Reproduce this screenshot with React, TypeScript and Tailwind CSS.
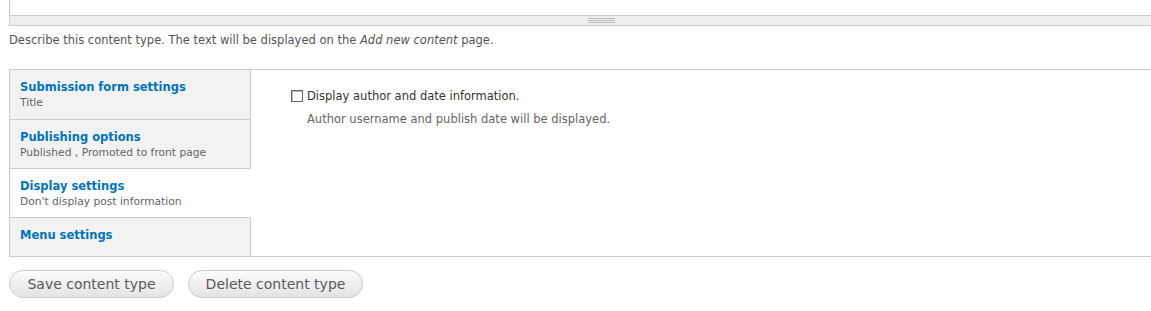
import React from 'react';

interface Tab {
  title: string;
  summary?: string;
  active?: boolean;
  height: string;
}

const tabs: Tab[] = [
  { title: 'Submission form settings', summary: 'Title', height: 'h-[50px]' },
  { title: 'Publishing options', summary: 'Published , Promoted to front page', height: 'h-[49px]' },
  { title: 'Display settings', summary: "Don't display post information", active: true, height: 'h-[49px]' },
  { title: 'Menu settings', height: 'h-[38px]' },
];

export default function App() {
  return (
    <div className="w-[1151px] h-[311px] overflow-hidden bg-white text-[#333] font-['DejaVu_Sans',Verdana,sans-serif]">
      {/* textarea bottom + grippie */}
      <div className="ml-[9px] w-[1184px]">
        <div className="h-[16px] border-l border-b border-[#ccc] bg-white" />
        <div className="h-[10px] border-l border-b border-[#ccc] bg-[#eee] flex justify-center pt-[2px]">
          <div className="flex flex-col gap-[1px] w-[27px]">
            <div className="h-px bg-[#bbb]" />
            <div className="h-px bg-[#bbb]" />
            <div className="h-px bg-[#bbb]" />
          </div>
        </div>
      </div>

      <p className="ml-[9px] mt-[6px] text-[11.5px] leading-[17px] text-[#555]">
        Describe this content type. The text will be displayed on the <em>Add new content</em> page.
      </p>

      {/* vertical tabs */}
      <div className="ml-[9px] mt-[20px] w-[1184px] flex border-t border-b border-l border-[#ccc]">
        <ul className="w-[241px] shrink-0">
          {tabs.map((t, i) => (
            <li
              key={i}
              className={`${t.height} px-[10px] pt-[9px] border-b border-[#ccc] last:border-b-0 ${
                t.active ? 'bg-white border-r border-r-white' : 'bg-[#f2f2f2] border-r'
              }`}
            >
              <div className="text-[11.5px] leading-[17px] font-bold text-[#0074bd]">{t.title}</div>
              {t.summary && <div className="text-[10.7px] leading-[14px] text-[#666]">{t.summary}</div>}
            </li>
          ))}
        </ul>
        <div className="flex-1 pl-[40px] pt-[18px]">
          <label className="flex items-center gap-[4px] text-[11.5px] leading-[16px] text-[#333]">
            <span className="w-[12px] h-[12px] border border-[#666] bg-white shadow-[inset_1px_1px_0_#bbb]" />
            Display author and date information.
          </label>
          <div className="ml-[16px] mt-[7px] text-[11.5px] leading-[16px] text-[#666]">
            Author username and publish date will be displayed.
          </div>
        </div>
      </div>

      {/* actions */}
      <div className="ml-[9px] mt-[13px] flex gap-[14px]">
        <button className="h-[28px] w-[165px] rounded-full border border-[#ccc] bg-gradient-to-b from-[#fcfcfc] to-[#e3e3e3] text-[14px] text-[#5a5a5a] font-['DejaVu_Sans',Verdana,sans-serif]">
          Save content type
        </button>
        <button className="h-[28px] w-[175px] rounded-full border border-[#ccc] bg-gradient-to-b from-[#fcfcfc] to-[#e3e3e3] text-[14px] text-[#5a5a5a] font-['DejaVu_Sans',Verdana,sans-serif]">
          Delete content type
        </button>
      </div>
    </div>
  );
}
